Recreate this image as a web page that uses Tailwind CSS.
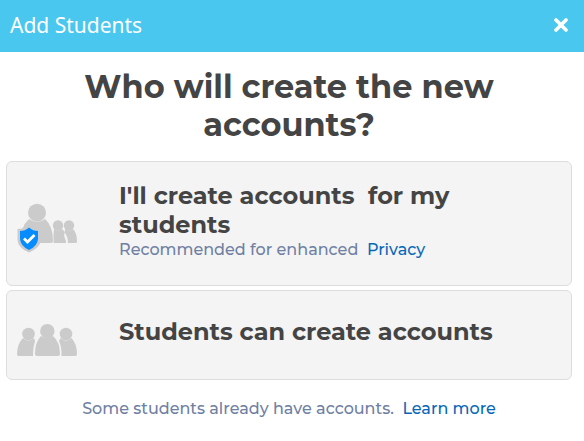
<!DOCTYPE html>
<html lang="en">
<head>
<meta charset="utf-8">
<meta name="viewport" content="width=device-width, initial-scale=1">
<title>Add Students</title>
<script src="https://cdn.jsdelivr.net/npm/@tailwindcss/browser@4"></script>
</head>
<body class="bg-white font-['Montserrat','Inter',sans-serif] text-[#444]">
<header class="flex h-[52px] items-center justify-between bg-[#49c7ef] pr-4 pb-[2px] pl-[10px] text-white">
  <h2 class="font-['Noto_Sans',sans-serif] text-[21px] leading-[30px]">Add Students</h2>
  <button type="button" aria-label="Close" class="block">
    <svg class="block size-[14px]" viewBox="0 0 14 14" fill="none" stroke="currentColor" stroke-width="3.6" stroke-linecap="round"><path d="M2 2L12 12M12 2L2 12"/></svg>
  </button>
</header>
<main class="pt-4 pr-3 pl-[6px]">
  <h1 class="mx-auto max-w-[480px] text-center text-[32px] leading-[38px] font-bold">Who will create the new accounts?</h1>
  <div class="mt-[17px] flex flex-col gap-1">
    <section class="relative flex items-center rounded-md border border-[#ddd] bg-[#f4f4f4] pt-[19px] pb-6 pl-[10px]">
      <svg class="mt-[14px] mr-[41px] h-[50px] w-[61px] shrink-0" viewBox="0 0 61 50" aria-hidden="true">
        <g fill="#cbcbcb">
          <circle cx="20" cy="9.700" r="9"/>
          <path d="M12 16Q20 22 28 16Q36 23 36 38Q36 40 34 40H4Q3 24 12 16Z"/>
          <circle cx="41" cy="22.500" r="5.200"/>
          <path d="M37 26Q41 29 45 26L48 29Q46 32 49 38V40H36.500V31Z"/>
          <circle cx="52" cy="22.500" r="5.200"/>
          <path d="M48 26Q52 29 56 26Q60 30 60 38Q60 40 59 40H51Q51 34 48 30Z"/>
        </g>
        <path d="M12 22Q17 26 24 26V37Q23 45 12 49.500Q1 45 .5 37V26Q7 26 12 22Z" fill="#c9cbcc"/>
        <path d="M12 24.500Q16 28 21 28V36Q20.500 43 12 47Q3.500 43 3 36V28Q8 28 12 24.500Z" fill="#078cff"/>
        <path d="M7 35.500L10.500 39L17.500 32" fill="none" stroke="#fff" stroke-width="2.800"/>
      </svg>
      <div class="min-w-0 flex-1 pr-6">
        <button type="button" class="block text-left text-[24px] leading-[29px] font-bold after:absolute after:inset-0">I'll create accounts&nbsp; for my students</button>
        <p class="text-[16px] leading-[22px] font-medium text-[#6f80a3]">Recommended for enhanced&nbsp; <a href="#" class="relative z-10 text-[#0868b8]">Privacy</a></p>
      </div>
    </section>
    <section class="relative flex items-start rounded-md border border-[#ddd] bg-[#f4f4f4] pt-[26px] pb-[21px] pl-[10px]">
      <svg class="mt-[7px] mr-[41px] h-[34px] w-[61px] shrink-0" viewBox="0 0 61 34" aria-hidden="true" fill="#cbcbcb">
        <circle cx="11.500" cy="10" r="6.300"/>
        <path d="M6 14Q11.500 19 17 14L18 17Q16 23 16 31V32H1.500Q0 32 0 30Q0 20 6 14Z"/>
        <circle cx="30.300" cy="7.200" r="7.200"/>
        <path d="M24 12Q30 16 36 12Q43 18 43 30Q43 32 41 32H20Q18 32 18 30Q18 18 24 12Z"/>
        <circle cx="49" cy="10" r="6.300"/>
        <path d="M43.500 14Q49 19 54.500 14Q60 20 60 30Q60 32 58.500 32H44.500Q45 24 42 17Z"/>
      </svg>
      <button type="button" class="block text-left text-[24px] leading-[29px] font-bold after:absolute after:inset-0">Students can create accounts</button>
    </section>
  </div>
  <p class="mt-[18px] text-center text-[16px] leading-[22px] font-medium text-[#6f80a3]">Some students already have accounts.&nbsp; <a href="#" class="text-[#0868b8]">Learn more</a></p>
</main>
</body>
</html>
